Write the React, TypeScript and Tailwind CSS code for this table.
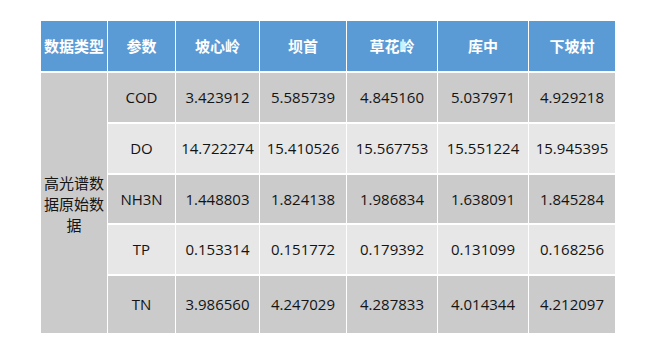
import React from 'react'

const heads = ['数据类型', '参数', '坡心岭', '坝首', '草花岭', '库中', '下坡村']

const rows = [
  { name: 'COD', vals: ['3.423912', '5.585739', '4.845160', '5.037971', '4.929218'] },
  { name: 'DO', vals: ['14.722274', '15.410526', '15.567753', '15.551224', '15.945395'] },
  { name: 'NH3N', vals: ['1.448803', '1.824138', '1.986834', '1.638091', '1.845284'] },
  { name: 'TP', vals: ['0.153314', '0.151772', '0.179392', '0.131099', '0.168256'] },
  { name: 'TN', vals: ['3.986560', '4.247029', '4.287833', '4.014344', '4.212097'] },
]

export default function App() {
  return (
    <div className="w-[662px] h-[353px] bg-white pl-[41px] pt-[21px] font-['Open_Sans','Noto_Sans_CJK_SC',sans-serif]">
      <div className="grid w-[574px] grid-cols-[66px_67px_83px_86px_90px_90px_86px] grid-rows-[50px_49px_49px_48px_49px_57px] gap-x-px gap-y-[2px] bg-white text-[15px] text-[#141414]">
        {heads.map((h) => (
          <div
            key={h}
            className="flex items-center justify-center bg-[#5b9bd5] font-bold text-white font-['Noto_Sans_CJK_SC',sans-serif]"
          >
            {h}
          </div>
        ))}

        <div className="row-span-5 flex items-center justify-center bg-[#cbcbcb] text-center leading-[21px] font-['Noto_Sans_CJK_SC',sans-serif]">
          <span className="w-[62px] break-all">高光谱数据原始数据</span>
        </div>

        {rows.map((r, i) => {
          const bg = i % 2 === 0 ? 'bg-[#cbcbcb]' : 'bg-[#e7e7e7]'
          return (
            <React.Fragment key={r.name}>
              <div className={`flex items-center justify-center ${bg}`}>{r.name}</div>
              {r.vals.map((v, j) => (
                <div key={j} className={`flex items-center justify-center ${bg}`}>
                  {v}
                </div>
              ))}
            </React.Fragment>
          )
        })}
      </div>
    </div>
  )
}
